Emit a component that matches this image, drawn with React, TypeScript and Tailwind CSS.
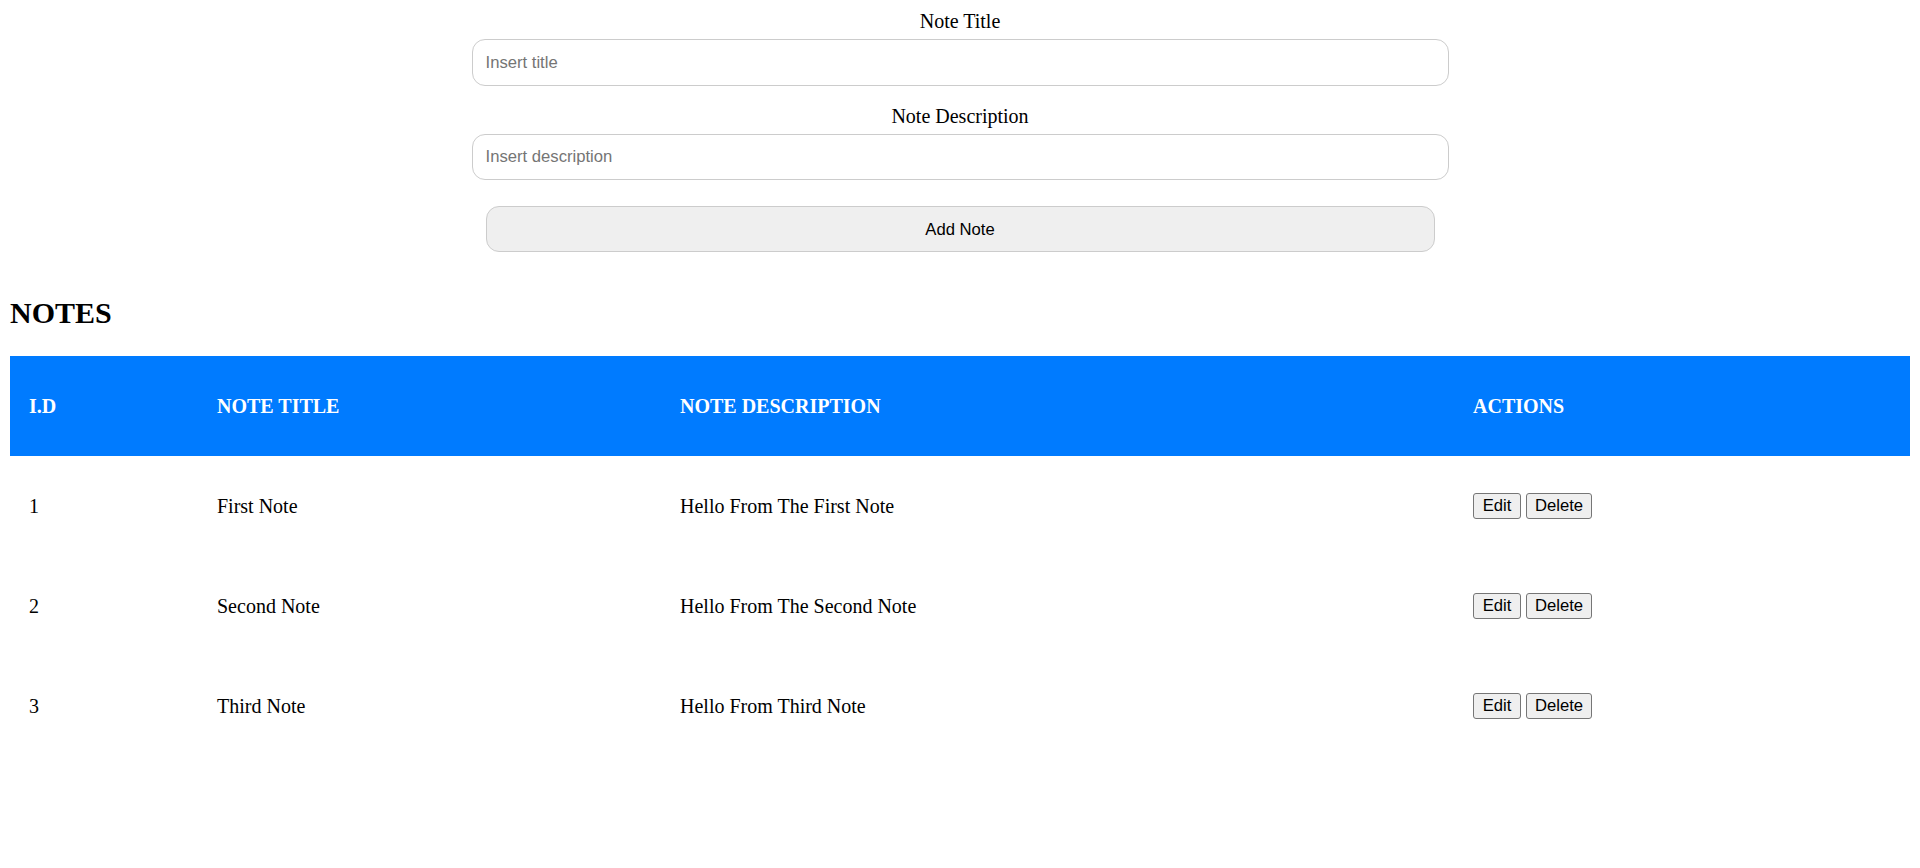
import React from "react";

const notes = [
  { id: 1, title: "First Note", description: "Hello From The First Note" },
  { id: 2, title: "Second Note", description: "Hello From The Second Note" },
  { id: 3, title: "Third Note", description: "Hello From Third Note" },
];

const cols = "grid grid-cols-[187px_463px_793px_1fr]";

const App = () => {
  return (
    <div className="w-full min-h-[868px] bg-white px-[10px] font-['Liberation_Serif',serif] text-[20px] text-black">
      <div className="flex flex-col items-center pt-[10px]">
        <label className="h-[23px] leading-[23px]">Note Title</label>
        <input
          type="text"
          placeholder="Insert title"
          className="mt-[6px] w-[977px] h-[47px] rounded-[13px] border border-[#cccccc] px-[13px] font-['Liberation_Sans',sans-serif] text-[16.67px] placeholder:text-[#757575] outline-none"
        />
        <label className="mt-[19px] h-[23px] leading-[23px]">Note Description</label>
        <input
          type="text"
          placeholder="Insert description"
          className="mt-[6px] w-[977px] h-[46px] rounded-[13px] border border-[#cccccc] px-[13px] font-['Liberation_Sans',sans-serif] text-[16.67px] placeholder:text-[#757575] outline-none"
        />
        <button className="mt-[26px] w-[949px] h-[46px] rounded-[13px] border border-[#cccccc] bg-[#efefef] font-['Liberation_Sans',sans-serif] text-[16.67px] text-black">
          Add Note
        </button>
      </div>

      <h2 className="mt-[44px] h-[34px] leading-[34px] text-[30px] font-bold">NOTES</h2>

      <div className="mt-[26px] w-full">
        <div className={`${cols} h-[100px] items-center bg-[#007bff] text-white font-bold`}>
          <div className="pl-[19px]">I.D</div>
          <div className="pl-[20px]">NOTE TITLE</div>
          <div className="pl-[20px]">NOTE DESCRIPTION</div>
          <div className="pl-[20px]">ACTIONS</div>
        </div>
        {notes.map((n) => (
          <div key={n.id} className={`${cols} h-[100px] items-center`}>
            <div className="pl-[19px]">{n.id}</div>
            <div className="pl-[20px]">{n.title}</div>
            <div className="pl-[20px]">{n.description}</div>
            <div className="pl-[20px] flex gap-[5px] font-['Liberation_Sans',sans-serif] text-[16.67px]">
              <button className="h-[26px] w-[48px] rounded-[3px] border border-[#767676] bg-[#efefef] leading-none">
                Edit
              </button>
              <button className="h-[26px] w-[66px] rounded-[3px] border border-[#767676] bg-[#efefef] leading-none">
                Delete
              </button>
            </div>
          </div>
        ))}
      </div>
    </div>
  );
};

export default App;
